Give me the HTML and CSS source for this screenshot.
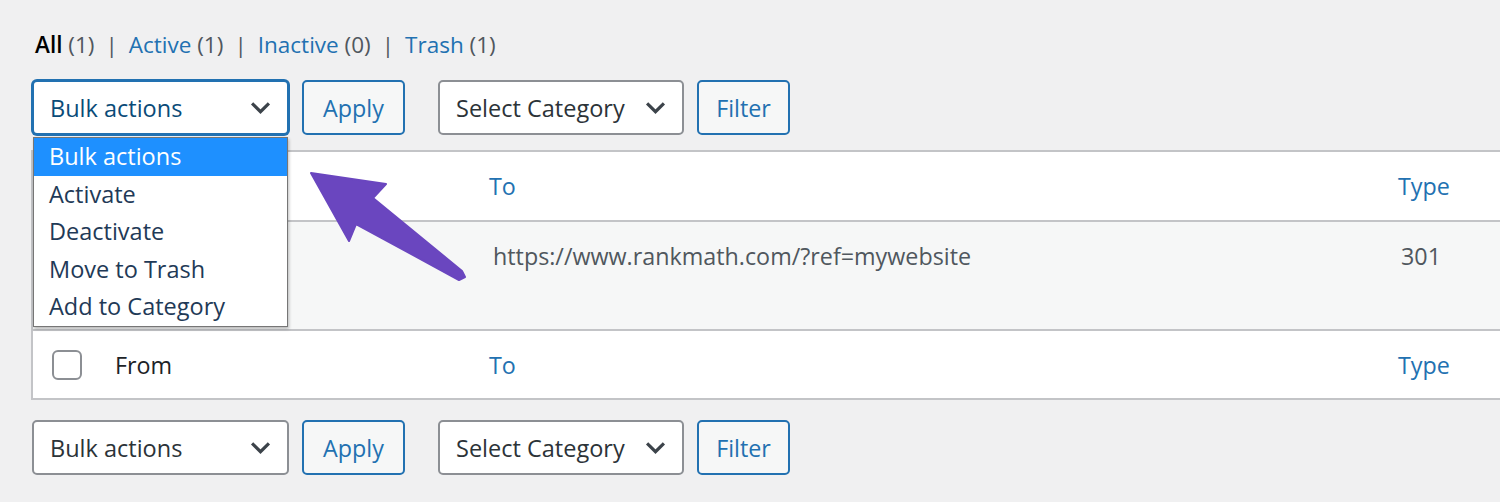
FILE: index.html
```html
<!DOCTYPE html>
<html>
<head>
<meta charset="utf-8">
<link rel="stylesheet" href="styles.css">
</head>
<body>
<div class="page">
  <ul class="subsubsub">
    <li><span class="current">All</span> <span class="count">(1)</span></li>
    <li class="sep">|</li>
    <li><span class="link">Active</span> <span class="count">(1)</span></li>
    <li class="sep">|</li>
    <li><span class="link">Inactive</span> <span class="count">(0)</span></li>
    <li class="sep">|</li>
    <li><span class="link">Trash</span> <span class="count">(1)</span></li>
  </ul>

  <div class="tablenav top">
    <div class="select-wrap">
      <div class="select bulk focused"><span>Bulk actions</span><svg class="chev" viewBox="0 0 20 12"><path d="M2 2 L10 10 L18 2" /></svg></div>
      <ul class="dropdown">
        <li class="hl">Bulk actions</li>
        <li>Activate</li>
        <li>Deactivate</li>
        <li>Move to Trash</li>
        <li>Add to Category</li>
      </ul>
    </div>
    <div class="button apply">Apply</div>
    <div class="select cat"><span>Select Category</span><svg class="chev" viewBox="0 0 20 12"><path d="M2 2 L10 10 L18 2" /></svg></div>
    <div class="button filter">Filter</div>
  </div>

  <div class="table">
    <div class="row head first">
      <div class="cell cb"><span class="checkbox"></span></div>
      <div class="cell from">From</div>
      <div class="cell to">To</div>
      <div class="cell type">Type</div>
    </div>
    <div class="row body">
      <div class="cell cb"><span class="checkbox"></span></div>
      <div class="cell from"></div>
      <div class="cell to url">https://www.rankmath.com/?ref=mywebsite</div>
      <div class="cell type code">301</div>
    </div>
    <div class="row head foot">
      <div class="cell cb"><span class="checkbox"></span></div>
      <div class="cell from">From</div>
      <div class="cell to">To</div>
      <div class="cell type">Type</div>
    </div>
  </div>

  <div class="tablenav bottom">
    <div class="select bulk"><span>Bulk actions</span><svg class="chev" viewBox="0 0 20 12"><path d="M2 2 L10 10 L18 2" /></svg></div>
    <div class="button apply">Apply</div>
    <div class="select cat"><span>Select Category</span><svg class="chev" viewBox="0 0 20 12"><path d="M2 2 L10 10 L18 2" /></svg></div>
    <div class="button filter">Filter</div>
  </div>

  <svg class="arrow" width="1500" height="502" viewBox="0 0 1500 502">
    <polygon points="311,173 386,184 373,198 462,271 465,277 459,280 356,224 349,241" />
  </svg>
</div>
</body>
</html>
```

FILE: styles.css
```css
* { box-sizing: border-box; }
html, body { margin: 0; padding: 0; }
body {
  background: #f0f0f1;
  font-family: "Open Sans", "Noto Sans", Arial, sans-serif;
  color: #1d2327;
  width: 1500px;
  height: 502px;
  overflow: hidden;
}
.page {
  position: relative;
  width: 1500px;
  height: 502px;
  padding: 30px 0 0 32px;
}
.subsubsub {
  list-style: none;
  margin: 0;
  padding: 0 0 0 3px;
  display: flex;
  align-items: center;
  font-size: 22.5px;
  line-height: 30px;
  height: 30px;
}
.subsubsub li { white-space: pre; }
.subsubsub .sep { color: #50575e; margin: 0 11px; }
.subsubsub .current { color: #000; font-weight: 600; }
.subsubsub .count { color: #50575e; }
.subsubsub .link { color: #2271b1; }

.tablenav {
  display: flex;
  align-items: center;
  height: 55px;
}
.tablenav.top { margin-top: 20px; }
.tablenav.bottom { margin-top: 20px; }

.select-wrap { position: relative; }
.select {
  height: 55px;
  background: #fff;
  border: 2px solid #8c8f94;
  border-radius: 5px;
  display: flex;
  align-items: center;
  justify-content: space-between;
  font-size: 23.5px;
  color: #2c3338;
}
.select.bulk { width: 257px; padding: 0 16px 0 16px; }
.select.cat { width: 246px; padding: 0 16px 0 16px; margin-left: 33px; }
.select.focused {
  border-color: #2271b1;
  box-shadow: 0 0 0 1px #2271b1;
  color: #0a4b78;
}
.chev { width: 21px; height: 13px; flex: none; }
.chev path { fill: none; stroke: #3c434a; stroke-width: 3; }

.button {
  height: 55px;
  border: 2px solid #2271b1;
  border-radius: 5px;
  background: #f6f7f7;
  color: #2271b1;
  font-size: 23.3px;
  display: flex;
  align-items: center;
  justify-content: center;
  margin-left: 13px;
}
.button.apply { width: 103px; }
.button.filter { width: 93px; }

.dropdown {
  position: absolute;
  left: 1px;
  top: 57px;
  width: 255px;
  margin: 0;
  padding: 0;
  list-style: none;
  background: #fff;
  border: 1px solid #767676;
  box-shadow: 1px 2px 3px rgba(0,0,0,0.25);
  z-index: 5;
  font-size: 23.5px;
  color: #1f3a57;
}
.dropdown li {
  height: 37.6px;
  line-height: 37px;
  padding-left: 15px;
}
.dropdown li.hl { background: #1e90ff; color: #fff; }

.table {
  margin-top: 15px;
  margin-left: -1px;
  width: 1500px;
  background: #fff;
  border: 2px solid #c3c4c7;
  border-right: none;
}
.row {
  display: flex;
  align-items: center;
  height: 68px;
  font-size: 23.3px;
}
.row.first .cb, .row.first .from { visibility: hidden; }
.row.body {
  height: 111px;
  background: #f6f7f7;
  border-top: 2px solid #c3c4c7;
  border-bottom: 2px solid #c3c4c7;
  align-items: flex-start;
  padding-top: 18px;
  color: #50575e;
}
.row.body .cb { visibility: hidden; }
.row.foot { height: 67px; }
.cell.cb { width: 82px; padding-left: 19px; display: flex; align-items: center; }
.checkbox {
  width: 30px;
  height: 30px;
  border: 2px solid #8c8f94;
  border-radius: 6px;
  background: #fff;
  display: block;
}
.cell.from { width: 374px; color: #1d2327; }
.cell.to { width: 909px; color: #2271b1; }
.cell.type { color: #2271b1; }
.cell.url { color: #50575e; padding-left: 4px; }
.cell.code { color: #50575e; padding-left: 3px; }

.arrow {
  position: absolute;
  left: 0;
  top: 0;
  pointer-events: none;
  z-index: 10;
}
.arrow polygon {
  fill: #6a46bf;
  stroke: #6a46bf;
  stroke-width: 2;
  stroke-linejoin: round;
}
```
